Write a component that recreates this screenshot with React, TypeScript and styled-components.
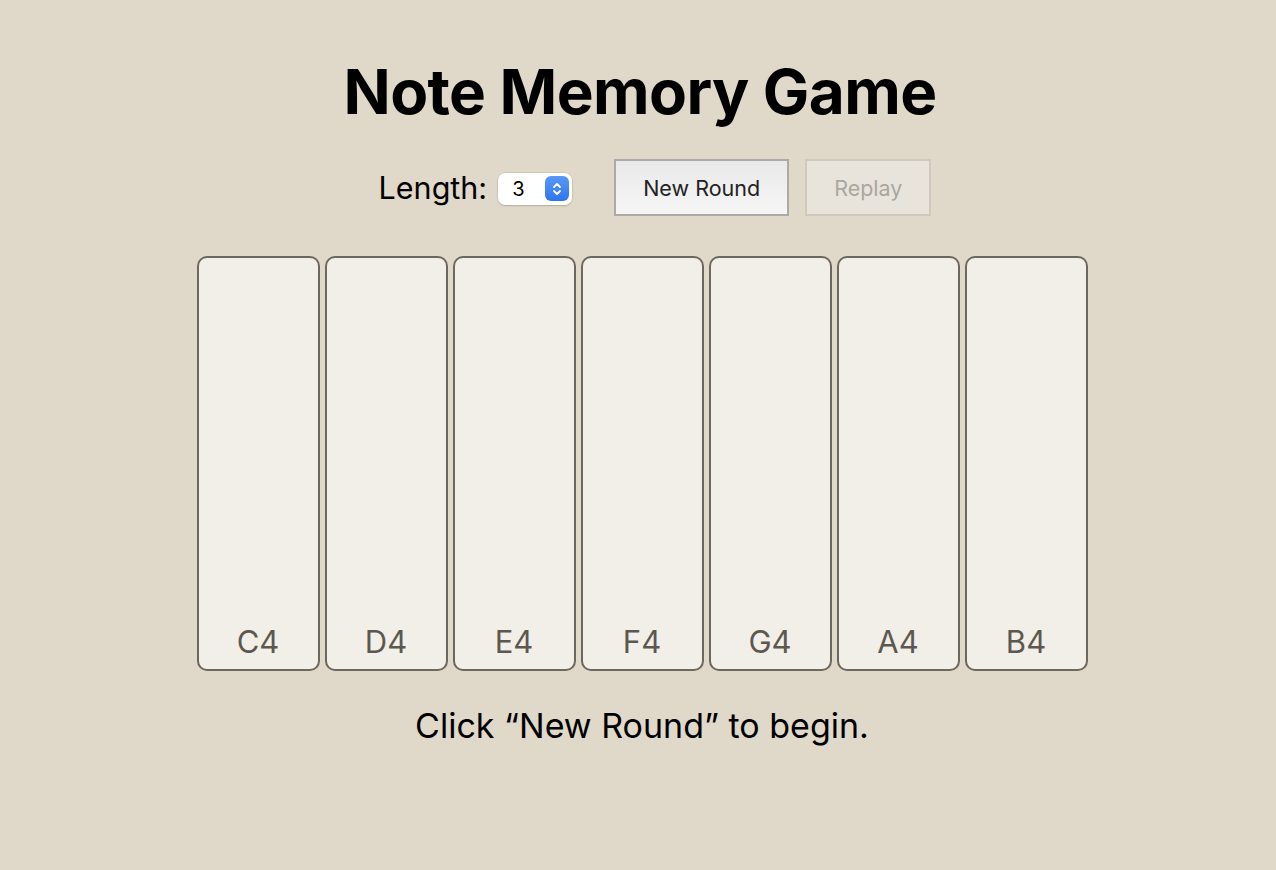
import styled, { createGlobalStyle } from "styled-components";

const GlobalStyle = createGlobalStyle`
  html, body {
    margin: 0;
    padding: 0;
    background: #e0d9ca;
    font-family: Inter, "Noto Sans", sans-serif;
    color: #000;
  }
`;

const NOTES = ["C4", "D4", "E4", "F4", "G4", "A4", "B4"];

const Page = styled.div`
  display: flex;
  flex-direction: column;
  align-items: center;
  padding-top: 52px;
  min-height: 870px;
  box-sizing: border-box;
`;

const Title = styled.h1`
  margin: 0 0 0 4px;
  font-size: 62px;
  font-weight: 700;
  letter-spacing: -0.6px;
  line-height: 80px;
`;

const Controls = styled.div`
  display: flex;
  align-items: center;
  margin-top: 27px;
  margin-left: 34px;
`;

const Label = styled.label`
  display: flex;
  align-items: center;
  gap: 11px;
  font-size: 30.5px;
  margin-right: 42px;
`;

const Select = styled.div`
  display: flex;
  align-items: center;
  justify-content: space-between;
  width: 74px;
  height: 32px;
  box-sizing: border-box;
  padding: 0 3px 0 14px;
  background: #fff;
  border-radius: 7px;
  box-shadow: 0 0 0 0.5px rgba(0, 0, 0, 0.12), 0 1px 2px rgba(0, 0, 0, 0.15);
  font-size: 20px;
  margin-top: 2px;
`;

const Stepper = styled.span`
  display: flex;
  align-items: center;
  justify-content: center;
  width: 24px;
  height: 25px;
  border-radius: 6px;
  background: linear-gradient(#5a98f6, #2f76ee);
`;

const Button = styled.button<{ disabled?: boolean }>`
  height: 57px;
  padding: 0 27px;
  font-family: Inter, "Noto Sans", sans-serif;
  font-size: 21.5px;
  border: 2px solid ${({ disabled }) => (disabled ? "#cfc9bd" : "#acaaa6")};
  border-radius: 0;
  color: ${({ disabled }) => (disabled ? "#aaa79f" : "#222")};
  background: ${({ disabled }) =>
    disabled ? "#e8e4dc" : "linear-gradient(#e9e9e9, #f6f6f6)"};
  margin-right: 16px;
  &:last-child {
    margin-right: 0;
  }
`;

const Keyboard = styled.div`
  display: flex;
  gap: 5px;
  margin-top: 40px;
  margin-left: 8px;
`;

const Key = styled.div`
  width: 123px;
  height: 415px;
  box-sizing: border-box;
  border: 2px solid #6c675f;
  border-radius: 10px;
  background: #f2efe8;
  display: flex;
  align-items: flex-end;
  justify-content: center;
  padding-bottom: 9px;
  font-size: 31px;
  color: #5c5850;
`;

const Status = styled.p`
  margin: 34px 0 0 8px;
  font-size: 34px;
  line-height: 42px;
`;

export default function App() {
  return (
    <>
      <GlobalStyle />
      <Page>
        <Title>Note Memory Game</Title>
        <Controls>
          <Label>
            Length:
            <Select>
              3
              <Stepper>
                <svg width="10" height="16" viewBox="0 0 10 16" fill="none" stroke="#fff" strokeWidth="1.8" strokeLinecap="round" strokeLinejoin="round">
                  <path d="M2 6l3-3 3 3" />
                  <path d="M2 10l3 3 3-3" />
                </svg>
              </Stepper>
            </Select>
          </Label>
          <Button>New Round</Button>
          <Button disabled>Replay</Button>
        </Controls>
        <Keyboard>
          {NOTES.map((n) => (
            <Key key={n}>{n}</Key>
          ))}
        </Keyboard>
        <Status>Click “New Round” to begin.</Status>
      </Page>
    </>
  );
}
